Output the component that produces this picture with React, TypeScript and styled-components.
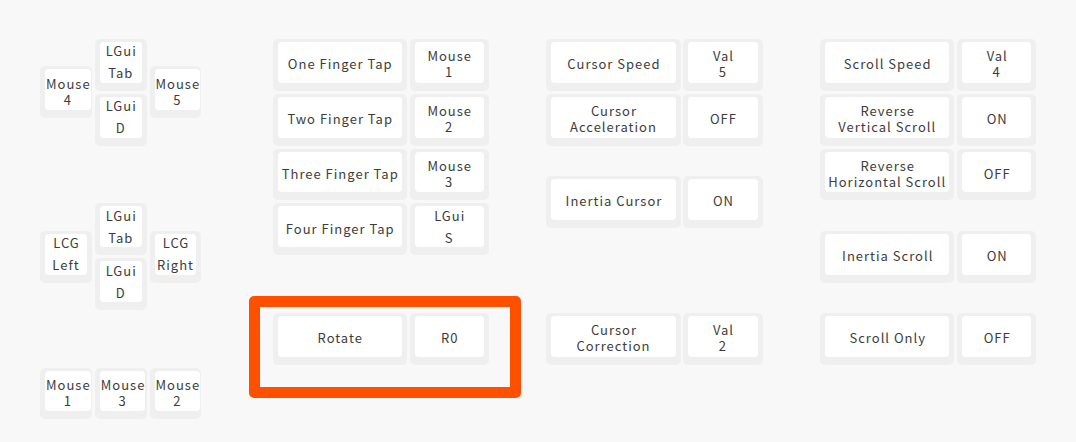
import React from "react";
import styled, { createGlobalStyle } from "styled-components";

const U = 54.8;

const Global = createGlobalStyle`
  html, body { margin: 0; padding: 0; background: #f8f8f8; }
  body { font-family: "Noto Sans CJK JP", "Noto Sans", sans-serif; }
`;

const Page = styled.div`
  width: 1076px;
  height: 442px;
  box-sizing: border-box;
  padding: 39px 0 0 40px;
  background: #f8f8f8;
`;

const Board = styled.div`
  position: relative;
  display: grid;
  grid-template-columns: repeat(74, ${U / 4}px);
  grid-template-rows: repeat(14, ${U / 2}px);
`;

const Cap = styled.div<{ $c: number; $w: number; $r: number }>`
  grid-column: ${(p) => p.$c + 1} / span ${(p) => p.$w};
  grid-row: ${(p) => p.$r + 1} / span 2;
  width: calc(100% - 2.8px);
  height: calc(100% - 3px);
  box-sizing: border-box;
  padding: 3px 5px 8px 5px;
  background: #efefef;
  border-radius: 5px;
  display: flex;
`;

const Top = styled.div<{ $spread?: boolean }>`
  flex: 1;
  background: #ffffff;
  border-radius: 4px;
  display: flex;
  align-items: center;
  justify-content: center;
  padding-top: ${(p) => (p.$spread ? "0px" : "4px")};
  box-sizing: border-box;
  color: #3c3c3c;
  font-size: 13px;
  line-height: ${(p) => (p.$spread ? "22px" : "16px")};
  text-align: center;
  white-space: pre;
  letter-spacing: 1px;
  text-indent: 1px;
`;

const Highlight = styled.div`
  position: absolute;
  left: 209px;
  top: 257px;
  width: 272px;
  height: 102px;
  box-sizing: border-box;
  border: 11px solid #ff5000;
  border-radius: 5px;
  pointer-events: none;
`;

type K = { c: number; w: number; r: number; l: string[]; spread?: boolean };

const keys: K[] = [
  { c: 0, w: 4, r: 1, l: ["Mouse", "4"] },
  { c: 4, w: 4, r: 0, l: ["LGui", "Tab"], spread: true },
  { c: 4, w: 4, r: 2, l: ["LGui", "D"], spread: true },
  { c: 8, w: 4, r: 1, l: ["Mouse", "5"] },
  { c: 0, w: 4, r: 7, l: ["LCG", "Left"], spread: true },
  { c: 4, w: 4, r: 6, l: ["LGui", "Tab"], spread: true },
  { c: 4, w: 4, r: 8, l: ["LGui", "D"], spread: true },
  { c: 8, w: 4, r: 7, l: ["LCG", "Right"], spread: true },
  { c: 0, w: 4, r: 12, l: ["Mouse", "1"] },
  { c: 4, w: 4, r: 12, l: ["Mouse", "3"] },
  { c: 8, w: 4, r: 12, l: ["Mouse", "2"] },

  { c: 17, w: 10, r: 0, l: ["One Finger Tap"] },
  { c: 27, w: 6, r: 0, l: ["Mouse", "1"] },
  { c: 17, w: 10, r: 2, l: ["Two Finger Tap"] },
  { c: 27, w: 6, r: 2, l: ["Mouse", "2"] },
  { c: 17, w: 10, r: 4, l: ["Three Finger Tap"] },
  { c: 27, w: 6, r: 4, l: ["Mouse", "3"] },
  { c: 17, w: 10, r: 6, l: ["Four Finger Tap"] },
  { c: 27, w: 6, r: 6, l: ["LGui", "S"], spread: true },
  { c: 17, w: 10, r: 10, l: ["Rotate"] },
  { c: 27, w: 6, r: 10, l: ["R0"] },

  { c: 37, w: 10, r: 0, l: ["Cursor Speed"] },
  { c: 47, w: 6, r: 0, l: ["Val", "5"] },
  { c: 37, w: 10, r: 2, l: ["Cursor", "Acceleration"] },
  { c: 47, w: 6, r: 2, l: ["OFF"] },
  { c: 37, w: 10, r: 5, l: ["Inertia Cursor"] },
  { c: 47, w: 6, r: 5, l: ["ON"] },
  { c: 37, w: 10, r: 10, l: ["Cursor", "Correction"] },
  { c: 47, w: 6, r: 10, l: ["Val", "2"] },

  { c: 57, w: 10, r: 0, l: ["Scroll Speed"] },
  { c: 67, w: 6, r: 0, l: ["Val", "4"] },
  { c: 57, w: 10, r: 2, l: ["Reverse", "Vertical Scroll"] },
  { c: 67, w: 6, r: 2, l: ["ON"] },
  { c: 57, w: 10, r: 4, l: ["Reverse", "Horizontal Scroll"] },
  { c: 67, w: 6, r: 4, l: ["OFF"] },
  { c: 57, w: 10, r: 7, l: ["Inertia Scroll"] },
  { c: 67, w: 6, r: 7, l: ["ON"] },
  { c: 57, w: 10, r: 10, l: ["Scroll Only"] },
  { c: 67, w: 6, r: 10, l: ["OFF"] },
];

export default function App() {
  return (
    <Page>
      <Global />
      <Board>
        {keys.map((k, i) => (
          <Cap key={i} $c={k.c} $w={k.w} $r={k.r}>
            <Top $spread={k.spread}>{k.l.join("\n")}</Top>
          </Cap>
        ))}
        <Highlight />
      </Board>
    </Page>
  );
}
